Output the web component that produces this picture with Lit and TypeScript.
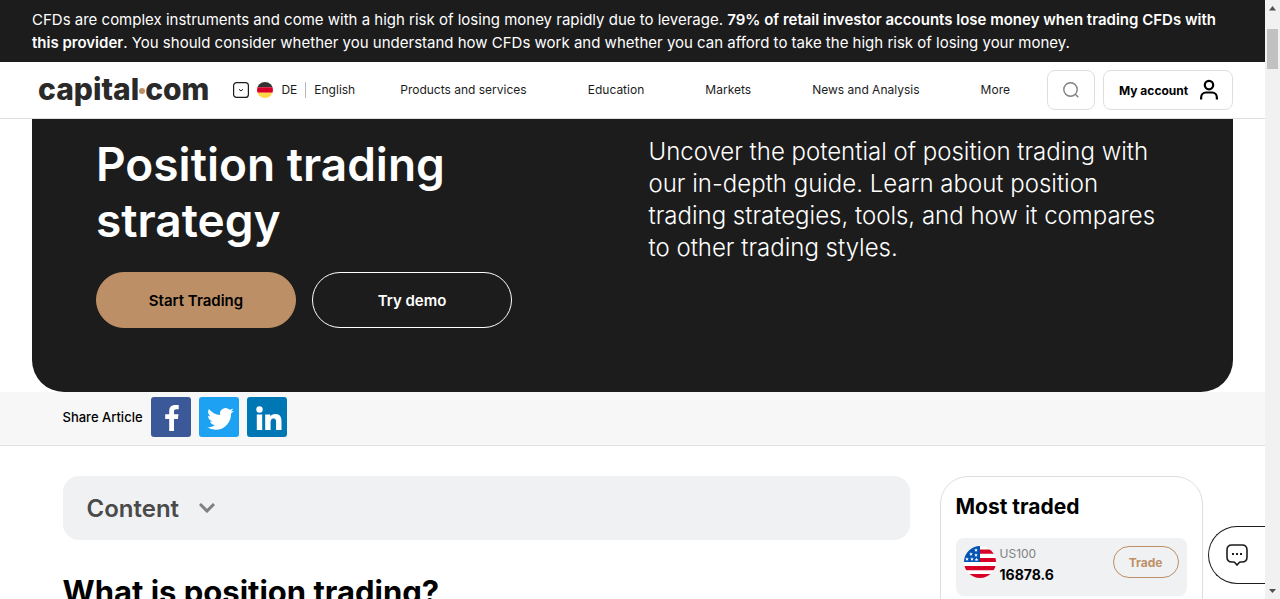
import { LitElement, html, css, svg } from "lit";
import { customElement } from "lit/decorators.js";

const NAV = ["Products and services", "Education", "Markets", "News and Analysis", "More"];

const STARS = [
  [12, 4], [7, 8], [12, 9], [3, 13], [8, 13], [12.5, 13.5],
];

@customElement("site-header")
class SiteHeader extends LitElement {
  static styles = css`
    :host { display: block; background: #fff; border-bottom: 1px solid #dedede; }
    .bar { display: flex; align-items: center; height: 56px; padding: 0 32px 0 38px; }
    a { color: #1c1c1c; text-decoration: none; }
    .logo { display: flex; align-items: center; padding-bottom: 2px; font-size: 30px; line-height: 40px; font-weight: 800; color: #2a2a2a; }
    .dot { width: 6px; height: 6px; border-radius: 50%; background: #bd8f66; margin-top: 4px; }
    .locale { display: flex; align-items: center; gap: 8px; margin-left: 24px; font-size: 12px; line-height: 24px; color: #1c1c1c; }
    .locale button { display: block; padding: 0; border: 0; background: none; height: 16px; }
    .locale svg { display: block; }
    .rule { width: 1px; height: 16px; background: #b5b5b5; }
    .nav { flex: 1; display: flex; justify-content: space-between; margin: 0 37px 0 45px; font-size: 12px; line-height: 24px; white-space: nowrap; }
    .actions { display: flex; gap: 8px; }
    .box { box-sizing: border-box; height: 40px; border: 1px solid #dedede; border-radius: 8px; background: #fff; display: flex; align-items: center; justify-content: center; font-family: inherit; color: #000; }
    .search { width: 48px; padding: 0; }
    .account { width: 130px; padding: 0 12px 0 15px; justify-content: space-between; font-size: 12px; font-weight: 700; white-space: nowrap; }
  `;
  render() {
    return html`
      <header class="bar">
        <a class="logo" href="#" aria-label="capital.com"><span>capital</span><span class="dot"></span><span>com</span></a>
        <div class="locale">
          <button aria-label="Choose country">
            <svg width="16" height="16" viewBox="0 0 16 16" fill="none" stroke="#1c1c1c">
              <rect x=".6" y=".6" width="14.8" height="14.8" rx="3" stroke-width="1.2" />
              <path d="M6 7.2 8 9l2-1.8" />
            </svg>
          </button>
          <svg width="16" height="16" viewBox="0 0 16 16">
            <clipPath id="de"><circle cx="8" cy="8" r="8" /></clipPath>
            <g clip-path="url(#de)">
              <path fill="#333" d="M0 0h16v5.3H0z" /><path fill="#d80027" d="M0 5.3h16v5.4H0z" /><path fill="#ffda44" d="M0 10.7h16V16H0z" />
            </g>
          </svg>
          <span>DE</span><span class="rule"></span><a href="#">English</a>
        </div>
        <nav class="nav">${NAV.map((n) => html`<a href="#">${n}</a>`)}</nav>
        <div class="actions">
          <button class="box search" aria-label="Search">
            <svg width="16" height="16" viewBox="0 0 16 16" fill="none" stroke="#808080" stroke-width="1.4">
              <circle cx="7.5" cy="7.5" r="6.7" /><path d="m12.3 12.3 3 3" />
            </svg>
          </button>
          <button class="box account">
            My account
            <svg width="22" height="22" viewBox="0 0 22 22" fill="none" stroke="#000" stroke-width="2.2">
              <circle cx="11" cy="6.1" r="4.2" /><path d="M3.1 20.5v-1.8c0-3 2-5.2 5-5.2h5.8c3 0 5 2.2 5 5.2v1.8" />
            </svg>
          </button>
        </div>
      </header>`;
  }
}

@customElement("share-bar")
class ShareBar extends LitElement {
  static styles = css`
    :host { display: block; background: #f7f7f7; border-bottom: 1px solid #e2e2e2; }
    .wrap { display: flex; align-items: center; gap: 8px; max-width: 1140px; margin: 0 auto; padding: 5px 0 8px; }
    .label { font-size: 13px; line-height: 24px; font-weight: 500; color: #000; }
    .links { display: flex; gap: 8px; }
    a, svg { display: block; }
  `;
  render() {
    return html`
      <div class="wrap">
        <span class="label">Share Article</span>
        <div class="links">
          <a href="#" aria-label="Facebook"><svg width="40" height="40" viewBox="0 0 40 40">
            <rect width="40" height="40" rx="3" fill="#3b5998" />
            <path fill="#fff" d="M18.2 34V21.9h-4v-4.6h4v-3.4c0-4 2.4-6 6-6 1.700 0 3 .1 3.500.2v4.100h-2.400c-1.900 0-2.300 1-2.300 2.300v2.800h4.500l-.6 4.600H23V34z" />
          </svg></a>
          <a href="#" aria-label="Twitter"><svg width="40" height="40" viewBox="0 0 40 40">
            <rect width="40" height="40" rx="3" fill="#1da1f2" />
            <path fill="#fff" transform="translate(8 8.500) scale(1.120)" d="M24 4.600a10 10 0 0 1-2.800.8 5 5 0 0 0 2.100-2.700 10 10 0 0 1-3.100 1.200 4.900 4.900 0 0 0-8.400 4.500A14 14 0 0 1 1.700 3.100a4.900 4.900 0 0 0 1.500 6.600 5 5 0 0 1-2.200-.6v.1a4.900 4.900 0 0 0 3.900 4.800 5 5 0 0 1-2.200.1 4.900 4.900 0 0 0 4.600 3.400A9.900 9.900 0 0 1 0 19.500 14 14 0 0 0 7.500 21.700c9.100 0 14.300-7.700 14-14.600A10 10 0 0 0 24 4.600z" />
          </svg></a>
          <a href="#" aria-label="LinkedIn"><svg width="40" height="40" viewBox="0 0 40 40">
            <rect width="40" height="40" rx="3" fill="#0077b5" />
            <circle cx="12.500" cy="12.500" r="3.200" fill="#fff" />
            <path fill="#fff" d="M9.800 17.500h5.400v15.500H9.800zM18.200 17.500h5.100v2.100c.8-1.400 2.600-2.500 5-2.500 5 0 6.200 3.300 6.200 7.600v8.300h-5.400v-7.400c0-1.900-.2-4-2.600-4s-2.900 1.900-2.900 3.900v7.500h-5.400z" />
          </svg></a>
        </div>
      </div>`;
  }
}

@customElement("most-traded")
class MostTraded extends LitElement {
  static styles = css`
    :host { display: block; box-sizing: border-box; border: 1px solid #dedede; border-radius: 28px; padding: 14px 15px 40px; }
    h2 { margin: 0 0 15px; font-size: 21px; line-height: 32px; font-weight: 700; color: #000; }
    .row { display: flex; align-items: flex-start; gap: 4px; padding: 8px; border-radius: 8px; background: #f0f1f3; }
    .flag { display: block; }
    .info { flex: 1; display: flex; flex-direction: column; }
    .name { font-size: 12px; line-height: 16px; color: #808080; }
    .price { font-size: 14px; line-height: 26px; font-weight: 700; color: #000; }
    .trade { box-sizing: border-box; height: 32px; padding: 0 15px; border: 1px solid #bd8f66; border-radius: 16px; background: none; font-family: inherit; font-size: 12px; font-weight: 700; color: #bd8f66; }
  `;
  render() {
    return html`
      <h2>Most traded</h2>
      <div class="row">
        <svg class="flag" width="32" height="32" viewBox="0 0 32 32">
          <clipPath id="us"><circle cx="16" cy="16" r="16" /></clipPath>
          <g clip-path="url(#us)">
            <path fill="#fff" d="M0 0h32v32H0z" />
            <path fill="#d80027" d="M15 3.500h17v4.200H15zM15 12h17v4H15zM0 20h32v4.200H0zM0 28h32v4H0z" />
            <path fill="#0052b4" d="M0 0h16v16H0z" />
            ${STARS.map(([x, y]) => svg`<path fill="#fff" transform="translate(${x} ${y})" d="m0-2 .5 1.400h1.500l-1.200.9.500 1.500L0 .9l-1.300.9.500-1.500L-2-.6h1.500z" />`)}
          </g>
        </svg>
        <div class="info"><span class="name">US100</span><span class="price">16878.6</span></div>
        <button class="trade">Trade</button>
      </div>`;
  }
}

@customElement("app-root")
class AppRoot extends LitElement {
  static styles = css`
    :host { display: block; font-family: Inter, "Liberation Sans", sans-serif; color: #000; background: #fff; }
    .window { display: grid; grid-template-columns: minmax(0, 1fr) 15px; height: 100vh; overflow: hidden; }
    .page { position: relative; overflow: hidden; }
    .risk { background: #1c1c1c; color: #fff; font-size: 15px; line-height: 23px; font-weight: 400; padding: 8px 32px; }
    .risk p { margin: 0; }
    .risk b { font-weight: 600; }
    .hero { display: grid; grid-template-columns: 1fr 1fr; gap: 32px; margin: 0 32px; padding: 17px 64px 64px; background: #1c1c1c; color: #fff; border-radius: 0 0 32px 32px; }
    h1 { margin: 0 0 24px; font-size: 46px; line-height: 56px; font-weight: 600; }
    .lead { margin: 0; font-size: 24px; line-height: 32px; font-weight: 300; }
    .buttons { display: flex; gap: 16px; }
    .cta { box-sizing: border-box; width: 200px; height: 56px; border: 1px solid #fff; border-radius: 28px; background: none; color: #fff; font-family: inherit; font-size: 15px; font-weight: 600; }
    .primary { background: #bd8f66; border-color: #bd8f66; color: #000; }
    .body { display: grid; grid-template-columns: minmax(0, 1fr) 263px; gap: 30px; max-width: 1140px; margin: 30px auto 0; align-items: start; }
    .toc { display: flex; align-items: center; gap: 20px; width: 100%; height: 64px; padding: 0 24px; border: 0; border-radius: 16px; background: #f0f1f3; font-family: inherit; font-size: 24px; font-weight: 600; color: #4a4a4a; }
    h2 { margin: 32px 0 0; font-size: 31px; line-height: 40px; font-weight: 700; }
    .chat { position: absolute; right: 0; bottom: 15px; box-sizing: border-box; width: 57px; height: 58px; padding: 0 0 0 17px; border: 1px solid #1c1c1c; border-right: 0; border-radius: 29px 0 0 29px; background: #fff; }
    .chat svg { display: block; }
    .scroll { display: flex; flex-direction: column; align-items: center; background: #f1f1f1; }
    .scroll svg { display: block; }
    .thumb { width: 11px; height: 40px; margin: 12px 0 auto; background: #c1c1c1; }
  `;
  render() {
    return html`
      <div class="window">
        <div class="page">
          <div class="risk">
            <p>CFDs are complex instruments and come with a high risk of losing money rapidly due to leverage. <b>79% of retail investor accounts lose money when trading CFDs with this provider</b>. You should consider whether you understand how CFDs work and whether you can afford to take the high risk of losing your money.</p>
          </div>
          <site-header></site-header>
          <section class="hero">
            <div>
              <h1>Position trading strategy</h1>
              <div class="buttons">
                <button class="cta primary">Start Trading</button>
                <button class="cta">Try demo</button>
              </div>
            </div>
            <p class="lead">Uncover the potential of position trading with our in-depth guide. Learn about position trading strategies, tools, and how it compares to other trading styles.</p>
          </section>
          <share-bar></share-bar>
          <div class="body">
            <main>
              <button class="toc">
                Content
                <svg width="16" height="10" viewBox="0 0 16 10" fill="none" stroke="#808080" stroke-width="3"><path d="m1 1 7 7 7-7" /></svg>
              </button>
              <h2>What is position trading?</h2>
            </main>
            <most-traded></most-traded>
          </div>
          <button class="chat" aria-label="Chat">
            <svg width="22" height="22" viewBox="0 0 22 22" fill="none" stroke="#1c1c1c" stroke-width="1.600">
              <path d="M6 1h10c3.200 0 5 1.800 5 5v7c0 3.200-1.800 5-5 5h-1.500c-.8 0-1.200.3-1.700.9L11 21l-1.800-2.100c-.5-.6-.9-.9-1.700-.9H6c-3.200 0-5-1.800-5-5V6c0-3.200 1.800-5 5-5z" />
              <path d="M6 10h2M10 10h2M14 10h2" stroke-width="2" />
            </svg>
          </button>
        </div>
        <div class="scroll" aria-hidden="true">
          <svg width="15" height="17" viewBox="0 0 15 17"><path fill="#505050" d="M4 10.500 7.500 6l3.500 4.500z" /></svg>
          <div class="thumb"></div>
          <svg width="15" height="17" viewBox="0 0 15 17"><path fill="#505050" d="M4 7l3.500 4L11 7z" /></svg>
        </div>
      </div>`;
  }
}
